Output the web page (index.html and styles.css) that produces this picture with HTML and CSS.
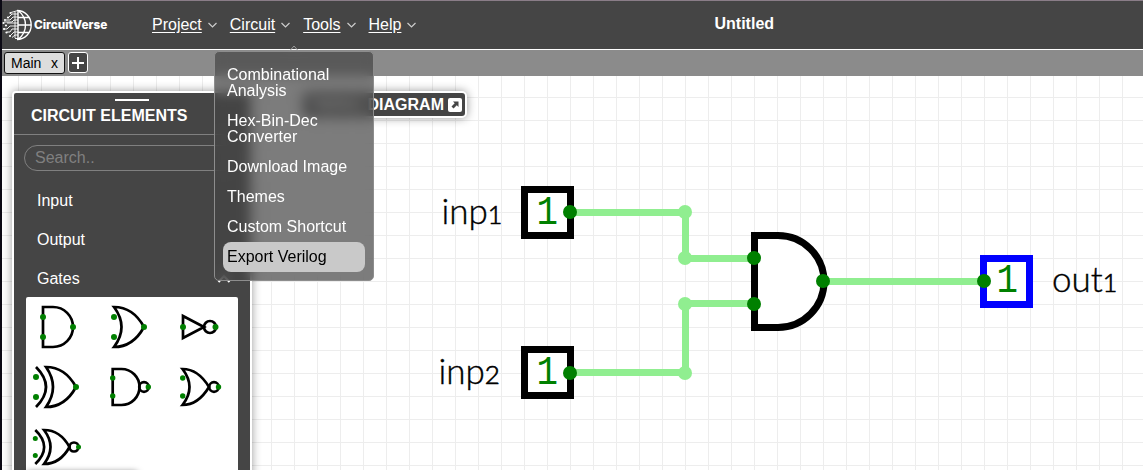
FILE: index.html
```html
<!DOCTYPE html>
<html lang="en">
<head>
<meta charset="utf-8">
<title>CircuitVerse</title>
<link rel="stylesheet" href="styles.css">
</head>
<body>
<div class="app">
  <header class="navbar">
    <svg class="globe" width="31" height="32" viewBox="0 0 31 32" fill="none" stroke="#fff" stroke-width="1.4">
      <path d="M15 1.500A14.200 14.500 0 0 1 15 30.500M16 1.500V30.500M16 1.500C26 9 26 23 16 30.500M16 16H29M16 8.500H26.500M16 23.500H26.500"/>
      <path stroke-width=".9" d="M16 1.500L9 3.500M16 5H10L7 8M16 8H11L8 11H4M16 11H12L10 13H2M16 14H5M16 17H8L5 20H2M16 20H10L8 23H5M16 23H12L8 27M16 26H13L10 28.500M16 29.500H13M13 3V29"/>
      <g fill="#fff" stroke="none"><circle cx="8.500" cy="4" r="1.100"/><circle cx="6" cy="8.500" r="1.100"/><circle cx="3" cy="11" r="1.100"/><circle cx="1.500" cy="14" r="1.100"/><circle cx="4" cy="16.500" r="1.100"/><circle cx="2" cy="20" r="1.100"/><circle cx="4.500" cy="23.500" r="1.100"/><circle cx="8" cy="27" r="1.100"/></g>
    </svg>
    <span class="brand">CircuitVerse</span>
    <nav class="menus">
      <span class="entry"><a>Project</a><svg width="9" height="6" viewBox="0 0 9 6"><path d="M.5 1l4 4 4-4"/></svg></span>
      <span class="entry"><a>Circuit</a><svg width="9" height="6" viewBox="0 0 9 6"><path d="M.5 1l4 4 4-4"/></svg></span>
      <span class="entry"><a>Tools</a><svg width="9" height="6" viewBox="0 0 9 6"><path d="M.5 1l4 4 4-4"/></svg></span>
      <span class="entry"><a>Help</a><svg width="9" height="6" viewBox="0 0 9 6"><path d="M.5 1l4 4 4-4"/></svg></span>
    </nav>
    <strong class="project-name">Untitled</strong>
  </header>
  <div class="tabs">
    <div class="tab"><span>Main</span><span>x</span></div>
    <div class="add-tab"><svg width="12" height="12" viewBox="0 0 12 12"><path d="M6 0v12M0 6h12" stroke="#fff" stroke-width="2"/></svg></div>
  </div>
  <main class="workspace">
    <svg class="circuit" width="1141" height="394" viewBox="2 76 1141 394">
      <g class="wire">
        <path d="M570 212.500H685.500V258.500H754M570 372.500H685.500V303.500H754M823 281.500H984"/>
        <g class="joint"><circle cx="685" cy="212" r="7"/><circle cx="685" cy="258" r="7"/><circle cx="685" cy="304" r="7"/><circle cx="685" cy="373" r="7"/></g>
      </g>
      <g class="part">
        <rect x="524.500" y="189.500" width="46" height="46"/>
        <rect x="524.500" y="349.500" width="46" height="46"/>
        <path d="M754.500 235.500H778A46 46 0 0 1 778 327.500H754.500Z"/>
        <rect class="out" x="983.500" y="258.500" width="46" height="46"/>
      </g>
      <g class="pin"><circle cx="570" cy="212" r="7"/><circle cx="570" cy="373" r="7"/><circle cx="754" cy="258" r="7"/><circle cx="754" cy="304" r="7"/><circle cx="823" cy="281" r="7"/><circle cx="984" cy="281" r="7"/></g>
      <g class="value"><text x="536.500" y="224" textLength="21.500" lengthAdjust="spacingAndGlyphs">1</text><text x="536.500" y="384" textLength="21.500" lengthAdjust="spacingAndGlyphs">1</text><text x="996.500" y="292" textLength="21.500" lengthAdjust="spacingAndGlyphs">1</text></g>
      <g class="label">
        <text x="441.500" y="224">inp<tspan class="digit">1</tspan></text>
        <text x="438.500" y="384">inp<tspan class="digit two">2</tspan></text>
        <text x="1052" y="292">out<tspan class="digit">1</tspan></text>
      </g>
    </svg>
    <aside class="elements">
      <div class="grip"></div>
      <h2>CIRCUIT ELEMENTS</h2>
      <div class="search">Search..</div>
      <div class="category">Input</div>
      <div class="category">Output</div>
      <div class="category">Gates<svg width="14" height="9" viewBox="0 0 14 9"><path d="M1.500 8L7 2l5.500 6" fill="none" stroke="#fff" stroke-width="2"/></svg></div>
      <div class="gates">
        <svg viewBox="26 297 70 60"><path d="M43 307H53A20 20 0 0 1 53 347H43Z"/><circle class="dot" cx="43" cy="317" r="3"/><circle class="dot" cx="43" cy="337" r="3"/><circle class="dot" cx="73" cy="327" r="3"/></svg>
        <svg viewBox="96 297 71 60"><path d="M114 307C128 307 138 316 144 327C138 338 128 347 114 347Q129 327 114 307Z"/><circle class="dot" cx="114" cy="317" r="3"/><circle class="dot" cx="114" cy="337" r="3"/><circle class="dot" cx="144" cy="327" r="3"/></svg>
        <svg viewBox="167 297 71 60"><path d="M183 316L204 327L183 338Z"/><circle cx="210" cy="327" r="6"/><circle class="dot" cx="183" cy="327" r="3"/><circle class="dot" cx="215.500" cy="327" r="3"/></svg>
        <svg viewBox="26 357 70 60"><path d="M36 367Q56 387 36 407M46 367C60 367 70 376 76 387C70 398 60 407 46 407Q60 387 46 367Z"/><circle class="dot" cx="36" cy="377" r="3"/><circle class="dot" cx="36" cy="397" r="3"/><circle class="dot" cx="76" cy="387" r="3"/></svg>
        <svg viewBox="96 357 71 60"><path d="M112.700 369H121.500A18 18 0 0 1 121.500 405H112.700Z"/><circle cx="144" cy="387" r="4.800"/><circle class="dot" cx="112.700" cy="378" r="2.700"/><circle class="dot" cx="112.700" cy="396" r="2.700"/><circle class="dot" cx="148.300" cy="387" r="2.700"/></svg>
        <svg viewBox="167 357 71 60"><path d="M182.500 369C195 369 203 377 209 387C203 397 195 405 182.500 405Q196.500 387 182.500 369Z"/><circle cx="214" cy="387" r="4.800"/><circle class="dot" cx="182.700" cy="378" r="2.700"/><circle class="dot" cx="182.700" cy="396" r="2.700"/><circle class="dot" cx="218.500" cy="387" r="2.700"/></svg>
        <svg viewBox="26 417 70 60"><path d="M35.300 430Q53 447 35.300 464M44 430C56 430 64 437 69.500 447C64 457 56 464 44 464Q57 447 44 430Z"/><circle cx="74" cy="447" r="4.500"/><circle class="dot" cx="35.300" cy="438.500" r="2.500"/><circle class="dot" cx="35.300" cy="455.500" r="2.500"/><circle class="dot" cx="78.500" cy="447" r="2.500"/></svg>
      </div>
      <div class="edge-shadow"></div>
    </aside>
    <div class="timing"><span>TIMING DIAGRAM</span><svg width="14" height="14" viewBox="0 0 14 14"><rect width="14" height="14" rx="2" fill="#fff"/><path d="M5 3.500h5.500V9L8.800 7.300 5.500 10.500 3.500 8.500 6.700 5.200Z" fill="#454545"/></svg></div>
  </main>
  <svg class="menu-arrow" width="12" height="8" viewBox="0 0 12 8"><path d="M2 5.500L6 1l4 4.500M0 7h12" fill="none" stroke="#999"/></svg>
  <div class="dropdown">
    <div>Combinational Analysis</div>
    <div>Hex-Bin-Dec Converter</div>
    <div>Download Image</div>
    <div>Themes</div>
    <div>Custom Shortcut</div>
    <div class="active">Export Verilog</div>
  </div>
</div>
</body>
</html>
```
FILE: styles.css
```css
* { box-sizing: border-box; }
body { margin: 0; font: 16px/16px "Liberation Sans", Arial, sans-serif; color: #fff; }
.app { position: relative; width: 1143px; height: 470px; overflow: hidden; display: flex; flex-direction: column; border-left: 2px solid #0b0914; }
.navbar { height: 50px; flex: none; display: flex; align-items: center; background: #454545; border-top: 1px solid #8a7d88; border-bottom: 1px solid #fff; }
.globe { flex: none; }
.brand { width: 74px; margin-left: 1px; font: 800 11.800px/16px Inter, sans-serif; white-space: nowrap; }
.menus { display: flex; margin-left: 44px; width: 300px; gap: 13px; }
.entry { display: flex; align-items: center; gap: 6px; }
.entry a { text-decoration: underline; text-underline-offset: 2px; }
.entry path { fill: none; stroke: #ccc; stroke-width: 1.200; }
.project-name { margin-left: 262.500px; padding-bottom: 2px; }
.tabs { height: 26px; flex: none; display: flex; gap: 3px; padding: 2px; background: #8b8b8b; }
.tab { display: flex; justify-content: space-between; align-items: center; width: 61px; height: 22px; padding: 0 6px; background: #ddd; border: 1px solid #111; border-radius: 3px; color: #000; font-size: 14px; }
.add-tab { display: grid; place-items: center; width: 20px; height: 21px; background: #454545; border: 1px solid #fff; border-radius: 3px; }
.workspace { position: relative; flex: 1; overflow: hidden; background-color: #fff; background-image: linear-gradient(90deg, #ededed 1px, transparent 1px), linear-gradient(#ededed 1px, transparent 1px); background-size: 23px 23px; background-position: 16px 0, 0 21px; }
.circuit { display: block; }
.wire path { fill: none; stroke: lightgreen; stroke-width: 7; }
.joint { fill: lightgreen; }
.part { fill: #fff; stroke: #000; stroke-width: 7; }
.part .out { stroke: #00f; }
.pin { fill: green; }
.value { fill: green; font: 41px "Liberation Mono", monospace; }
.label { fill: #000; stroke: #000; stroke-width: .4; font: 300 35px Lato, sans-serif; }
.digit { font-size: 25px; stroke-width: .7; }
.two { font-size: 26px; }
.elements { position: absolute; left: 10px; top: 15px; width: 240px; height: 420px; background: #454545; border: 2px solid #fff; border-radius: 4px; box-shadow: 0 0 10px rgba(0,0,0,.4); }
.grip { width: 34px; height: 2px; margin: 6px 0 0 101px; background: #fff; }
.elements h2 { margin: 0; height: 34px; padding: 7px 17px; font-size: 16px; line-height: 16px; border-bottom: 1px solid #808080; }
.search { width: 216px; height: 26px; margin: 10px; padding: 4px 10px; border: 1px solid #808080; border-radius: 13px; color: #808080; }
.category { display: flex; justify-content: space-between; align-items: center; height: 39px; padding: 0 19px 0 23px; }
.gates { display: grid; grid-template-columns: 70px 71px 71px; grid-auto-rows: 60px; width: 212px; margin: -1px 0 0 12px; background: #fff; border-radius: 2px 2px 0 0; }
.gates svg { width: 100%; height: 60px; fill: none; stroke: #000; stroke-width: 2.700; }
.gates .dot { fill: green; stroke: none; }
.edge-shadow { position: absolute; left: 12px; top: 379px; width: 112px; height: 20px; border-radius: 4px; box-shadow: 0 0 6px rgba(0,0,0,.6); }
.timing { position: absolute; left: 300px; top: 15px; width: 165px; height: 27px; display: flex; justify-content: flex-end; align-items: center; gap: 4px; padding: 0 3px; background: #454545; border: 2px solid #fff; border-radius: 5px; box-shadow: 0 0 10px rgba(0,0,0,.4); font-weight: 700; white-space: nowrap; }
.menu-arrow { position: absolute; left: 286px; top: 45px; }
.dropdown { position: absolute; left: 212px; top: 51px; width: 160px; height: 230px; padding: 8px 8px 7px; background: rgba(69,69,69,.7); border: 1px solid #8d8d8d; border-radius: 5px; backdrop-filter: blur(6px); }
.dropdown div { padding: 7px 4px; border-radius: 8px; }
.dropdown .active { background: #c9c9c9; color: #000; }
```
